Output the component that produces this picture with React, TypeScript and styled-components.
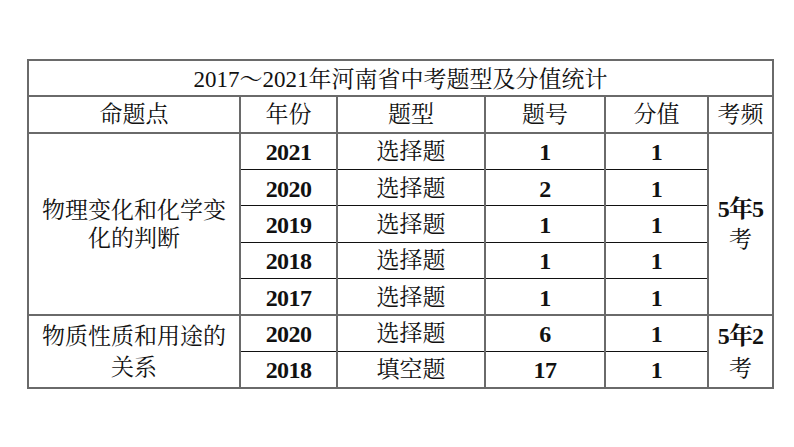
import React from 'react'
import styled, { createGlobalStyle } from 'styled-components'

const GlobalStyle = createGlobalStyle`
  html, body {
    margin: 0;
    padding: 0;
    background: #ffffff;
  }
  body {
    font-family: "Liberation Serif", "Noto Serif CJK SC", "Noto Sans CJK SC", serif;
    color: #111111;
  }
`

const Page = styled.div`
  width: 794px;
  height: 447px;
  padding: 59px 0 0 27px;
  box-sizing: border-box;
`

const Table = styled.table`
  width: 745px;
  border-collapse: collapse;
  table-layout: fixed;
  border: 2px solid #6a6a6a;
`

const Tr = styled.tr<{ $h: number }>`
  height: ${p => p.$h}px;
`

const TitleCell = styled.td`
  padding: 3px 0 0 0;
  line-height: 26px;
  text-align: center;
  font-size: 23px;
  font-weight: 400;
  border-bottom: 2px solid #6a6a6a;
`

const HeadCell = styled.td`
  padding: 1px 0 0 0;
  line-height: 26px;
  text-align: center;
  font-size: 23px;
  font-weight: 400;
  border-right: 2px solid #6a6a6a;
  border-bottom: 2px solid #6a6a6a;
  &:last-child {
    border-right: none;
  }
`

const Cell = styled.td<{ $bold?: boolean; $sectionEnd?: boolean }>`
  padding: 2px 0 0 0;
  line-height: 26px;
  text-align: center;
  vertical-align: middle;
  font-size: ${p => (p.$bold ? '24px' : '23px')};
  font-weight: ${p => (p.$bold ? 700 : 400)};
  letter-spacing: ${p => (p.$bold ? '-0.6px' : '0')};
  border-right: 2px solid #6a6a6a;
  border-bottom: ${p => (p.$sectionEnd ? '2px solid #6a6a6a' : '1.5px solid #111111')};
`

const SpanCell = styled.td<{ $lineGap: number }>`
  padding: 2px 0 0 0;
  text-align: center;
  vertical-align: middle;
  font-size: 23px;
  line-height: ${p => p.$lineGap}px;
  font-weight: 400;
  border-right: 2px solid #6a6a6a;
  border-bottom: 2px solid #6a6a6a;
  &:last-child {
    border-right: none;
  }
`

const Line = styled.span`
  display: block;
  white-space: nowrap;
`

const Mark = styled.span`
  font-weight: 700;
  font-size: 24px;
  letter-spacing: -0.8px;
`

type Row = { year: string; kind: string; no: string; score: string }

const groups: { topic: string[]; freq: [string, string]; rows: Row[]; gap: number; freqGap: number }[] = [
  {
    topic: ['物理变化和化学变', '化的判断'],
    freq: ['5年5', '考'],
    gap: 28,
    freqGap: 30,
    rows: [
      { year: '2021', kind: '选择题', no: '1', score: '1' },
      { year: '2020', kind: '选择题', no: '2', score: '1' },
      { year: '2019', kind: '选择题', no: '1', score: '1' },
      { year: '2018', kind: '选择题', no: '1', score: '1' },
      { year: '2017', kind: '选择题', no: '1', score: '1' },
    ],
  },
  {
    topic: ['物质性质和用途的', '关系'],
    freq: ['5年2', '考'],
    gap: 31,
    freqGap: 32,
    rows: [
      { year: '2020', kind: '选择题', no: '6', score: '1' },
      { year: '2018', kind: '填空题', no: '17', score: '1' },
    ],
  },
]

const App = () => {
  return (
    <Page>
      <GlobalStyle />
      <Table>
        <colgroup>
          <col style={{ width: 212 }} />
          <col style={{ width: 97 }} />
          <col style={{ width: 148 }} />
          <col style={{ width: 120 }} />
          <col style={{ width: 103 }} />
          <col style={{ width: 65 }} />
        </colgroup>
        <tbody>
          <Tr $h={36}>
            <TitleCell colSpan={6}>2017～2021年河南省中考题型及分值统计</TitleCell>
          </Tr>
          <Tr $h={37}>
            <HeadCell>命题点</HeadCell>
            <HeadCell>年份</HeadCell>
            <HeadCell>题型</HeadCell>
            <HeadCell>题号</HeadCell>
            <HeadCell>分值</HeadCell>
            <HeadCell>考频</HeadCell>
          </Tr>
          {groups.map(g =>
            g.rows.map((r, i) => {
              const last = i === g.rows.length - 1
              return (
                <Tr $h={36.4} key={g.topic[0] + r.year + i}>
                  {i === 0 && (
                    <SpanCell rowSpan={g.rows.length} $lineGap={g.gap}>
                      {g.topic.map(t => (
                        <Line key={t}>{t}</Line>
                      ))}
                    </SpanCell>
                  )}
                  <Cell $bold $sectionEnd={last}>{r.year}</Cell>
                  <Cell $sectionEnd={last}>{r.kind}</Cell>
                  <Cell $bold $sectionEnd={last}>{r.no}</Cell>
                  <Cell $bold $sectionEnd={last}>{r.score}</Cell>
                  {i === 0 && (
                    <SpanCell rowSpan={g.rows.length} $lineGap={g.freqGap}>
                      <Line>
                        <Mark>{g.freq[0]}</Mark>
                      </Line>
                      <Line>{g.freq[1]}</Line>
                    </SpanCell>
                  )}
                </Tr>
              )
            })
          )}
        </tbody>
      </Table>
    </Page>
  )
}

export default App
